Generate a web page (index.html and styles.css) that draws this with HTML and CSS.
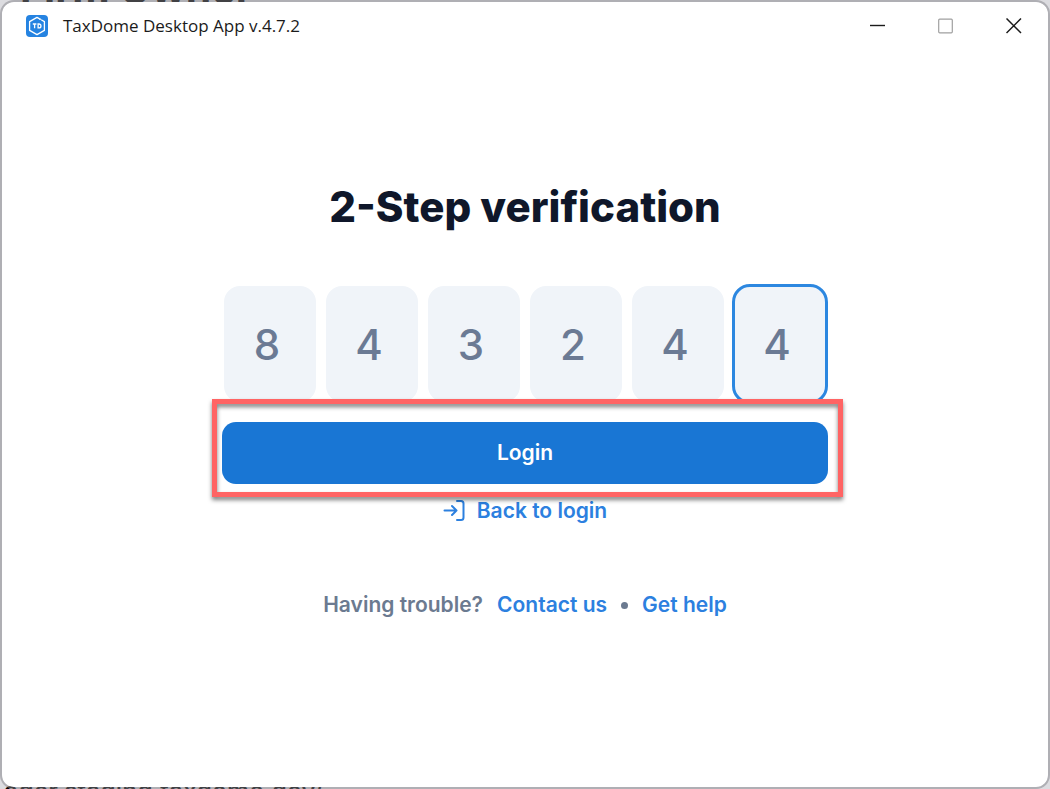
FILE: index.html
```html
<!DOCTYPE html>
<html lang="en">
<head>
<meta charset="UTF-8">
<title>TaxDome Desktop App</title>
<link rel="stylesheet" href="styles.css">
</head>
<body>
<div class="behind behind-top" aria-hidden="true">Firm Owner</div>
<div class="behind behind-bottom" aria-hidden="true">ager.staging.taxdome.dev/</div>
<div class="window">
    <header class="titlebar">
        <svg class="app-icon" viewBox="0 0 22 22" aria-hidden="true">
            <rect width="22" height="22" rx="4" fill="#2583e1"/>
            <path d="M13.2 3.6 11 2.4 3.6 6.6v8.8L11 19.6l7.400-4.200V6.600L15.600 5" fill="none" stroke="#fff" stroke-width="1.300" stroke-linejoin="round" stroke-linecap="round"/>
            <circle cx="14" cy="4.200" r="0.900" fill="#fff"/>
            <path d="M6.800 9h3.600M8.600 9v4.200M12.100 9v3.900h.9a1.950 1.950 0 0 0 0-3.900z" fill="none" stroke="#fff" stroke-width="1.300"/>
        </svg>
        <span class="app-name">TaxDome Desktop App v.4.7.2</span>
        <div class="controls">
            <button type="button" aria-label="Minimize">
                <svg viewBox="0 0 16 16"><path d="M0 7.500h15" stroke="#1b1b1b" stroke-width="1.400"/></svg>
            </button>
            <button type="button" aria-label="Maximize" disabled>
                <svg viewBox="0 0 16 16"><rect x="0.700" y="1.200" width="13.600" height="13.600" rx="1" fill="none" stroke="#a0a0a0" stroke-width="1.200"/></svg>
            </button>
            <button type="button" aria-label="Close">
                <svg viewBox="0 0 16 16"><path d="M.5.500l14.500 14.500M15 .5.5 15" stroke="#1b1b1b" stroke-width="1.500"/></svg>
            </button>
        </div>
    </header>
    <main class="content">
        <h1>2-Step verification</h1>
        <form class="login" onsubmit="return false">
            <div class="code">
                <input type="text" maxlength="1" inputmode="numeric" aria-label="Digit 1" value="8">
                <input type="text" maxlength="1" inputmode="numeric" aria-label="Digit 2" value="4">
                <input type="text" maxlength="1" inputmode="numeric" aria-label="Digit 3" value="3">
                <input type="text" maxlength="1" inputmode="numeric" aria-label="Digit 4" value="2">
                <input type="text" maxlength="1" inputmode="numeric" aria-label="Digit 5" value="4">
                <input type="text" maxlength="1" inputmode="numeric" aria-label="Digit 6" value="4" class="active">
            </div>
            <div class="submit">
                <button type="submit" class="btn">Login</button>
                <div class="highlight"></div>
            </div>
        </form>
        <a href="#" class="back">
            <svg viewBox="0 0 22 22" aria-hidden="true">
                <path d="M1.500 10.500h12M9 6l4.500 4.500L9 15M14 1h4a2.500 2.500 0 0 1 2.500 2.500v14a2.500 2.500 0 0 1-2.500 2.500h-4" fill="none" stroke="currentColor" stroke-width="2" stroke-linecap="round" stroke-linejoin="round"/>
            </svg>
            Back to login
        </a>
        <div class="help">
            <span>Having trouble?</span>
            <a href="#">Contact us</a>
            <span class="dot"></span>
            <a href="#">Get help</a>
        </div>
    </main>
</div>
</body>
</html>
```
FILE: styles.css
```css
* {
    box-sizing: border-box;
}
body {
    position: relative;
    margin: 0;
    height: 100vh;
    overflow: hidden;
    background: #dcdce0;
    font-family: Inter, "Liberation Sans", sans-serif;
}
.window {
    position: relative;
    display: flex;
    flex-direction: column;
    height: 100vh;
    border: 2px solid rgba(130, 130, 136, 0.5);
    border-radius: 14px;
    background: #fff;
    background-clip: padding-box;
}
/* page that shows past the window edges */
.behind {
    position: absolute;
    white-space: nowrap;
    color: #000;
}
.behind-top {
    left: 20px;
    top: -36px;
    font-size: 41px;
    line-height: 50px;
    font-weight: 700;
}
.behind-bottom {
    left: 4px;
    bottom: -17px;
    font-size: 25px;
    line-height: 30px;
    font-weight: 500;
}

.titlebar {
    display: flex;
    align-items: center;
    height: 48px;
    padding: 0 26px 0 24px;
}
.app-icon {
    width: 22px;
    height: 22px;
    margin-right: 15px;
}
.app-name {
    font-family: "Open Sans", "Noto Sans", sans-serif;
    font-size: 17px;
    line-height: 24px;
    color: #1b1b1b;
}
.controls {
    display: flex;
    gap: 52px;
    margin-left: auto;
}
.controls button {
    width: 16px;
    height: 16px;
    padding: 0;
    border: 0;
    background: none;
}
.controls svg {
    display: block;
    width: 16px;
    height: 16px;
}

.content {
    display: flex;
    flex-direction: column;
    align-items: center;
    padding: 130px 24px 0;
}
h1 {
    margin: 0 0 50px;
    font-size: 42px;
    line-height: 54px;
    font-weight: 800;
    color: #0f172a;
}
.login {
    width: 100%;
    max-width: 606px;
}
.code {
    display: grid;
    grid-template-columns: repeat(6, minmax(0, 1fr));
    gap: 6px;
}
.code input {
    width: 100%;
    height: 120px;
    padding: 0 6px 0 0;
    border: 2px solid transparent;
    border-radius: 18px;
    background: #f0f4f9;
    background-clip: padding-box;
    font: 500 42px/50px Inter, "Liberation Sans", sans-serif;
    text-align: center;
    color: #6b7a94;
}
.code input:focus {
    outline: none;
}
.code .active {
    border: 3px solid #2c87e0;
}
.submit {
    position: relative;
    margin-top: 18px;
}
.btn {
    width: 100%;
    height: 62px;
    border: 0;
    border-radius: 14px;
    background: #1976d4;
    color: #fff;
    font: 600 21px/28px Inter, "Liberation Sans", sans-serif;
}
.highlight {
    position: absolute;
    top: -23px;
    right: -15px;
    bottom: -13px;
    left: -10px;
    border: 5px solid #ff6464;
    filter: drop-shadow(0 3px 2px rgba(0, 0, 0, 0.5));
    pointer-events: none;
}
a {
    color: #2c80df;
    text-decoration: none;
}
.back {
    display: flex;
    align-items: center;
    gap: 12px;
    margin-top: 13px;
    font-size: 21px;
    line-height: 28px;
    font-weight: 600;
}
.back svg {
    width: 22px;
    height: 22px;
}
.help {
    display: flex;
    align-items: center;
    gap: 14px;
    margin-top: 66px;
    font-size: 21px;
    line-height: 28px;
    font-weight: 600;
    color: #6b7a90;
}
.dot {
    width: 7px;
    height: 7px;
    border-radius: 50%;
    background: #6b7a90;
}
```
